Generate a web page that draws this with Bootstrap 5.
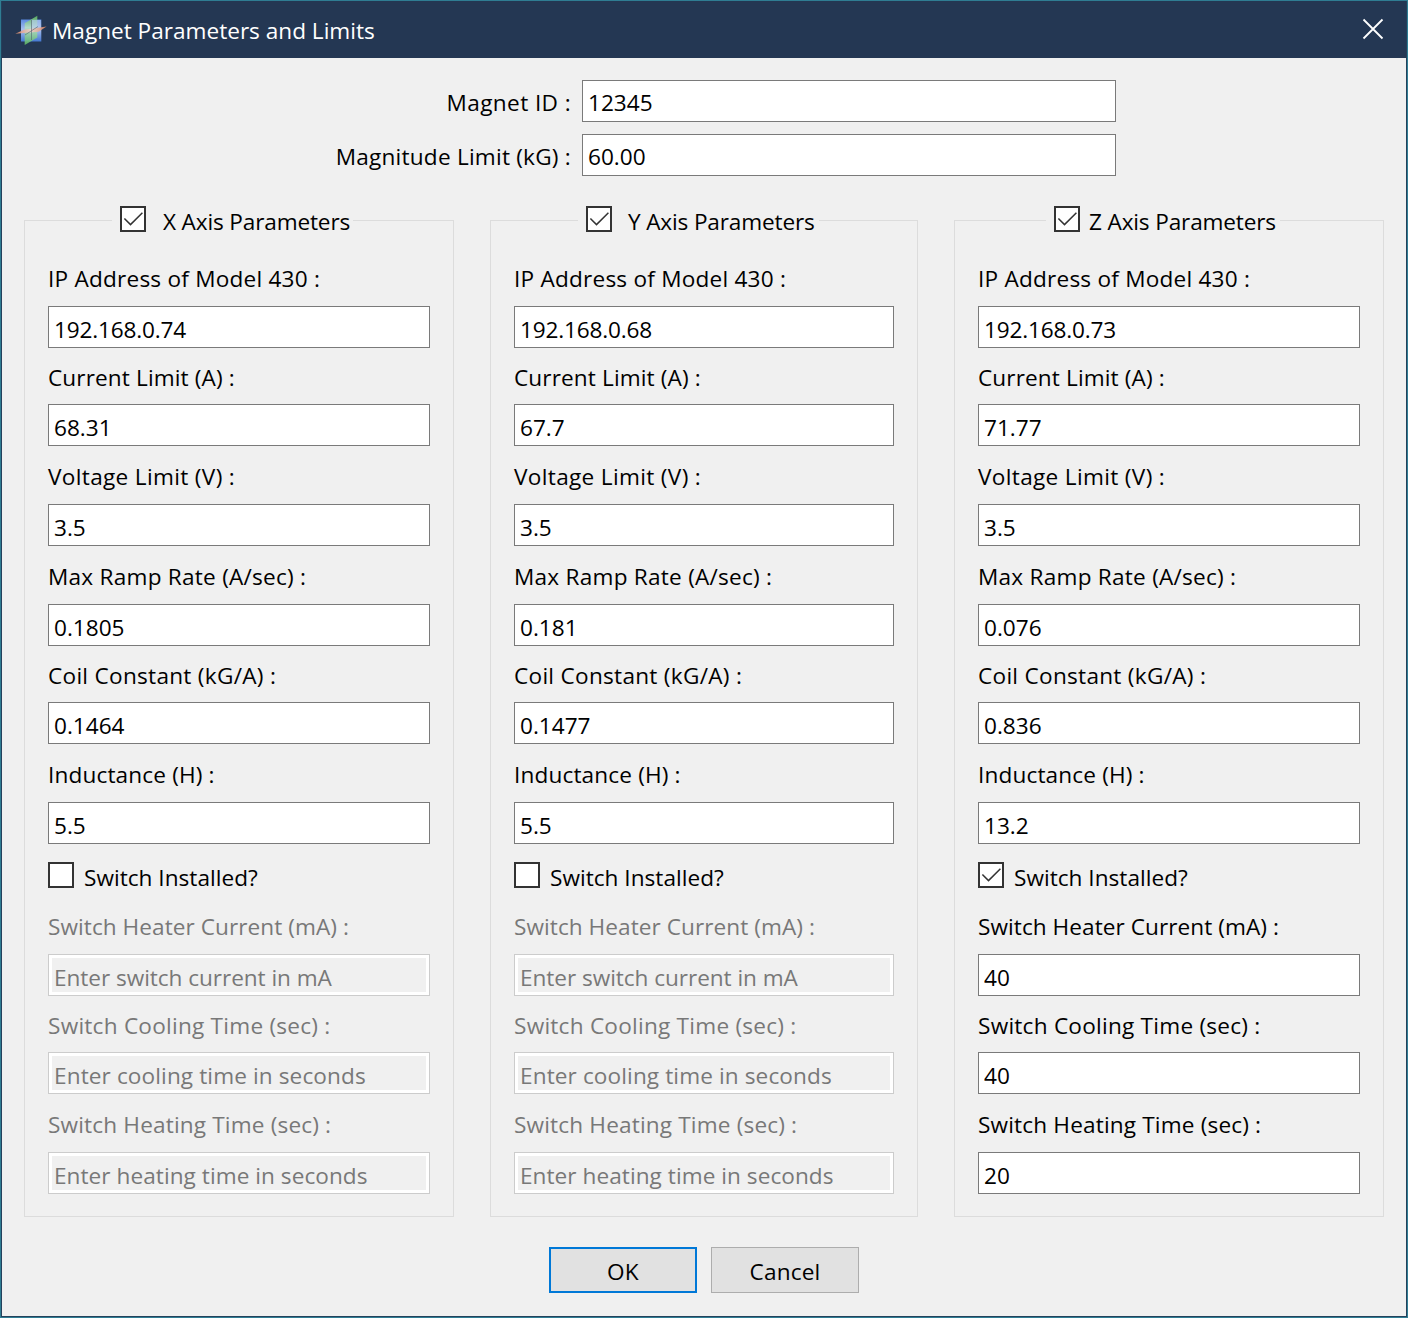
<!DOCTYPE html>
<html lang="en">
<head>
<meta charset="utf-8">
<meta name="viewport" content="width=device-width, initial-scale=1">
<title>Magnet Parameters and Limits</title>
<link href="https://cdn.jsdelivr.net/npm/bootstrap@5.3.0/dist/css/bootstrap.min.css" rel="stylesheet">
<style>
  body { font-family: "Open Sans", "Noto Sans", sans-serif; font-size: 22.6px; color: #000; background: #f0f0f0; }
  .window { width: 1408px; height: 1318px; border: 1px solid #2f7d93; background: #f0f0f0; overflow: hidden; }
  .window-inner { height: 1316px; border: solid #24415c; border-width: 0 1px 1px; }
  .titlebar { height: 57px; background: #243753; color: #fff; padding: 2px 22px 0 14px; }
  .titlebar svg { display: block; }
  .close-btn { margin-top: -3px; }

  .form-control, .form-control:disabled {
    height: 42px; padding: 4px 5px 0 5px; border: 1px solid #7a7a7a; border-radius: 0;
    font-size: 22.6px; line-height: 36px; color: #000; background: #fff; letter-spacing: 0;
  }
  .form-control:disabled {
    border-color: #ccc; background: #f0f0f0; box-shadow: inset 0 0 0 3px #fff; opacity: 1;
  }
  .form-control::placeholder { color: #787878; opacity: 1; letter-spacing: -.05px; }
  .form-control.v-ip { letter-spacing: -.18px; }
  .top-fields { padding-top: 22px; }
  .top-label { width: 569px; line-height: 42px; padding-top: 2px; text-align: right; height: 42px; }
  .top-fields .form-control { width: 534px; margin-left: 11px; padding-top: 3px; }

  .groups { padding: 44px 22px 0; }
  .axis { width: 430px; height: 997px; border: 1px solid #dcdcdc; padding: 0 23px; }
  .axis-y { width: 428px; }
  .axis-title { width: fit-content; height: 32px; margin: -15px 0 26px 64px; padding: 0 4px 0 8px; background: #f0f0f0; letter-spacing: -.15px; line-height: 32px; white-space: nowrap; }
  .axis-x .axis-title { padding-right: 3px; }
  .axis-z .axis-title { margin-left: 68px; }
  .axis-title .tick { margin: 0 16px 6px 0; }
  .axis-x .axis-title .tick { margin-right: 17px; }
  .axis-z .axis-title .tick { margin-right: 9px; }

  .fld label { display: block; height: 30px; line-height: 30px; margin: 16px 0 12px; white-space: nowrap; }
  .fld.tight label { margin: 15px 0 11px; }
  .axis-title + .fld label, .switch-row + .fld label { margin-top: 0; }
  .off label { color: #787878; }
  .t-ip { letter-spacing: .22px; }
  .t-cur { letter-spacing: .12px; }
  .t-volt { letter-spacing: .33px; }
  .t-ramp { letter-spacing: .24px; }
  .t-coil { letter-spacing: .28px; }
  .t-ind { letter-spacing: .15px; }
  .t-heater { letter-spacing: .06px; }
  .t-cool { letter-spacing: .24px; }
  .t-heat { letter-spacing: .16px; }
  .t-id { letter-spacing: .4px; }
  .p-cool::placeholder { letter-spacing: .11px; }
  .p-heat::placeholder { letter-spacing: .05px; }

  .tick {
    appearance: none; flex: none; display: block; width: 26px; height: 26px; margin: 0;
    border: 2px solid #333; background: #fff;
  }
  .tick:checked { background: #fff url("data:image/svg+xml,%3Csvg xmlns='http://www.w3.org/2000/svg' width='22' height='22'%3E%3Cpath d='M2.4 10.5 L8.5 16.6 L20.4 4.7' fill='none' stroke='%23333' stroke-width='1.5'/%3E%3C/svg%3E") 0 0 no-repeat; }
  .switch-row { height: 26px; margin: 18px 0 24px; }
  .switch-row label { line-height: 30px; margin: 1px 0 0 10px; letter-spacing: .02px; }

  .actions { gap: 14px; padding-top: 30px; }
  .btn-dialog, .btn-dialog:hover {
    width: 148px; height: 46px; padding: 3px 0 0; border: 1px solid #adadad; border-radius: 0;
    background: #e1e1e1; color: #000; font-size: 22.6px; line-height: 40px; letter-spacing: .2px;
  }
  .btn-default, .btn-default:hover { border: 2px solid #0078d7; }
</style>
<script src="https://cdn.jsdelivr.net/npm/bootstrap@5.3.0/dist/js/bootstrap.bundle.min.js"></script>
</head>
<body>
<div class="window">
<div class="window-inner">
  <header class="titlebar d-flex align-items-center">
    <svg width="32" height="32" viewBox="0 0 32 32" class="me-1" overflow="visible">
      <defs>
        <linearGradient id="blue" x1="0" y1="0" x2="0" y2="1"><stop offset="0" stop-color="#5b8ae0"/><stop offset=".45" stop-color="#a9c0ee"/><stop offset="1" stop-color="#4377d2"/></linearGradient>
        <linearGradient id="green" x1="0" y1="0" x2="0" y2="1"><stop offset="0" stop-color="#5cb563"/><stop offset=".4" stop-color="#b5dcc6"/><stop offset="1" stop-color="#5eb865"/></linearGradient>
        <linearGradient id="orange" x1="0" y1="0" x2="1" y2="0"><stop offset="0" stop-color="#e08a66"/><stop offset=".5" stop-color="#ecd0cc"/><stop offset="1" stop-color="#d9825c"/></linearGradient>
      </defs>
      <path d="M5 4.500H25.300V26.500H5Z" fill="url(#blue)"/>
      <path d="M8.700 8.200L21.300 .8V22.500L8.700 30Z" fill="url(#green)" opacity=".9"/>
      <path d="M15.500 5H24.800V13L15.500 15Z" fill="#b9cdf0" opacity=".6"/>
      <path d="M-.7 18.800L8 14.800L30.600 11.500L22.500 16.800Z" fill="url(#orange)" opacity=".88"/>
      <path d="M9 20L22 11.500M15.500 5V25" fill="none" stroke="#50606c" stroke-width="1" opacity=".6"/>
    </svg>
    <span>Magnet Parameters and Limits</span>
    <svg class="close-btn ms-auto" width="22" height="22" viewBox="0 0 22 22"><path d="M1.500 1.500L20.500 20.500M20.500 1.500L1.500 20.500" stroke="#fff" stroke-width="1.8" fill="none"/></svg>
  </header>

  <section class="top-fields">
    <div class="d-flex"><label class="top-label t-id" for="mid">Magnet ID :</label><input id="mid" class="form-control" value="12345"></div>
    <div class="d-flex mt-2 pt-1"><label class="top-label t-ip" for="mlim">Magnitude Limit (kG) :</label><input id="mlim" class="form-control" value="60.00"></div>
  </section>

  <main class="groups d-flex justify-content-between">
    <section class="axis axis-x">
      <div class="axis-title d-flex align-items-center"><input type="checkbox" class="tick" checked aria-label="X axis"><span>X Axis Parameters</span></div>
      <div class="fld"><label class="t-ip">IP Address of Model 430 :</label><input class="form-control v-ip" value="192.168.0.74"></div>
      <div class="fld tight"><label class="t-cur">Current Limit (A) :</label><input class="form-control" value="68.31"></div>
      <div class="fld"><label class="t-volt">Voltage Limit (V) :</label><input class="form-control" value="3.5"></div>
      <div class="fld"><label class="t-ramp">Max Ramp Rate (A/sec) :</label><input class="form-control" value="0.1805"></div>
      <div class="fld tight"><label class="t-coil">Coil Constant (kG/A) :</label><input class="form-control" value="0.1464"></div>
      <div class="fld"><label class="t-ind">Inductance (H) :</label><input class="form-control" value="5.5"></div>
      <div class="switch-row d-flex"><input type="checkbox" class="tick" id="swx"><label for="swx">Switch Installed?</label></div>
      <div class="fld off"><label class="t-heater">Switch Heater Current (mA) :</label><input class="form-control" placeholder="Enter switch current in mA" disabled></div>
      <div class="fld tight off"><label class="t-cool">Switch Cooling Time (sec) :</label><input class="form-control p-cool" placeholder="Enter cooling time in seconds" disabled></div>
      <div class="fld off"><label class="t-heat">Switch Heating Time (sec) :</label><input class="form-control p-heat" placeholder="Enter heating time in seconds" disabled></div>
    </section>

    <section class="axis axis-y">
      <div class="axis-title d-flex align-items-center"><input type="checkbox" class="tick" checked aria-label="Y axis"><span>Y Axis Parameters</span></div>
      <div class="fld"><label class="t-ip">IP Address of Model 430 :</label><input class="form-control v-ip" value="192.168.0.68"></div>
      <div class="fld tight"><label class="t-cur">Current Limit (A) :</label><input class="form-control" value="67.7"></div>
      <div class="fld"><label class="t-volt">Voltage Limit (V) :</label><input class="form-control" value="3.5"></div>
      <div class="fld"><label class="t-ramp">Max Ramp Rate (A/sec) :</label><input class="form-control" value="0.181"></div>
      <div class="fld tight"><label class="t-coil">Coil Constant (kG/A) :</label><input class="form-control" value="0.1477"></div>
      <div class="fld"><label class="t-ind">Inductance (H) :</label><input class="form-control" value="5.5"></div>
      <div class="switch-row d-flex"><input type="checkbox" class="tick" id="swy"><label for="swy">Switch Installed?</label></div>
      <div class="fld off"><label class="t-heater">Switch Heater Current (mA) :</label><input class="form-control" placeholder="Enter switch current in mA" disabled></div>
      <div class="fld tight off"><label class="t-cool">Switch Cooling Time (sec) :</label><input class="form-control p-cool" placeholder="Enter cooling time in seconds" disabled></div>
      <div class="fld off"><label class="t-heat">Switch Heating Time (sec) :</label><input class="form-control p-heat" placeholder="Enter heating time in seconds" disabled></div>
    </section>

    <section class="axis axis-z">
      <div class="axis-title d-flex align-items-center"><input type="checkbox" class="tick" checked aria-label="Z axis"><span>Z Axis Parameters</span></div>
      <div class="fld"><label class="t-ip">IP Address of Model 430 :</label><input class="form-control v-ip" value="192.168.0.73"></div>
      <div class="fld tight"><label class="t-cur">Current Limit (A) :</label><input class="form-control" value="71.77"></div>
      <div class="fld"><label class="t-volt">Voltage Limit (V) :</label><input class="form-control" value="3.5"></div>
      <div class="fld"><label class="t-ramp">Max Ramp Rate (A/sec) :</label><input class="form-control" value="0.076"></div>
      <div class="fld tight"><label class="t-coil">Coil Constant (kG/A) :</label><input class="form-control" value="0.836"></div>
      <div class="fld"><label class="t-ind">Inductance (H) :</label><input class="form-control" value="13.2"></div>
      <div class="switch-row d-flex"><input type="checkbox" class="tick" id="swz" checked><label for="swz">Switch Installed?</label></div>
      <div class="fld"><label class="t-heater">Switch Heater Current (mA) :</label><input class="form-control" value="40"></div>
      <div class="fld tight"><label class="t-cool">Switch Cooling Time (sec) :</label><input class="form-control" value="40"></div>
      <div class="fld"><label class="t-heat">Switch Heating Time (sec) :</label><input class="form-control" value="20"></div>
    </section>
  </main>

  <footer class="actions d-flex justify-content-center">
    <button type="button" class="btn btn-dialog btn-default">OK</button>
    <button type="button" class="btn btn-dialog">Cancel</button>
  </footer>
</div>
</div>
</body>
</html>
